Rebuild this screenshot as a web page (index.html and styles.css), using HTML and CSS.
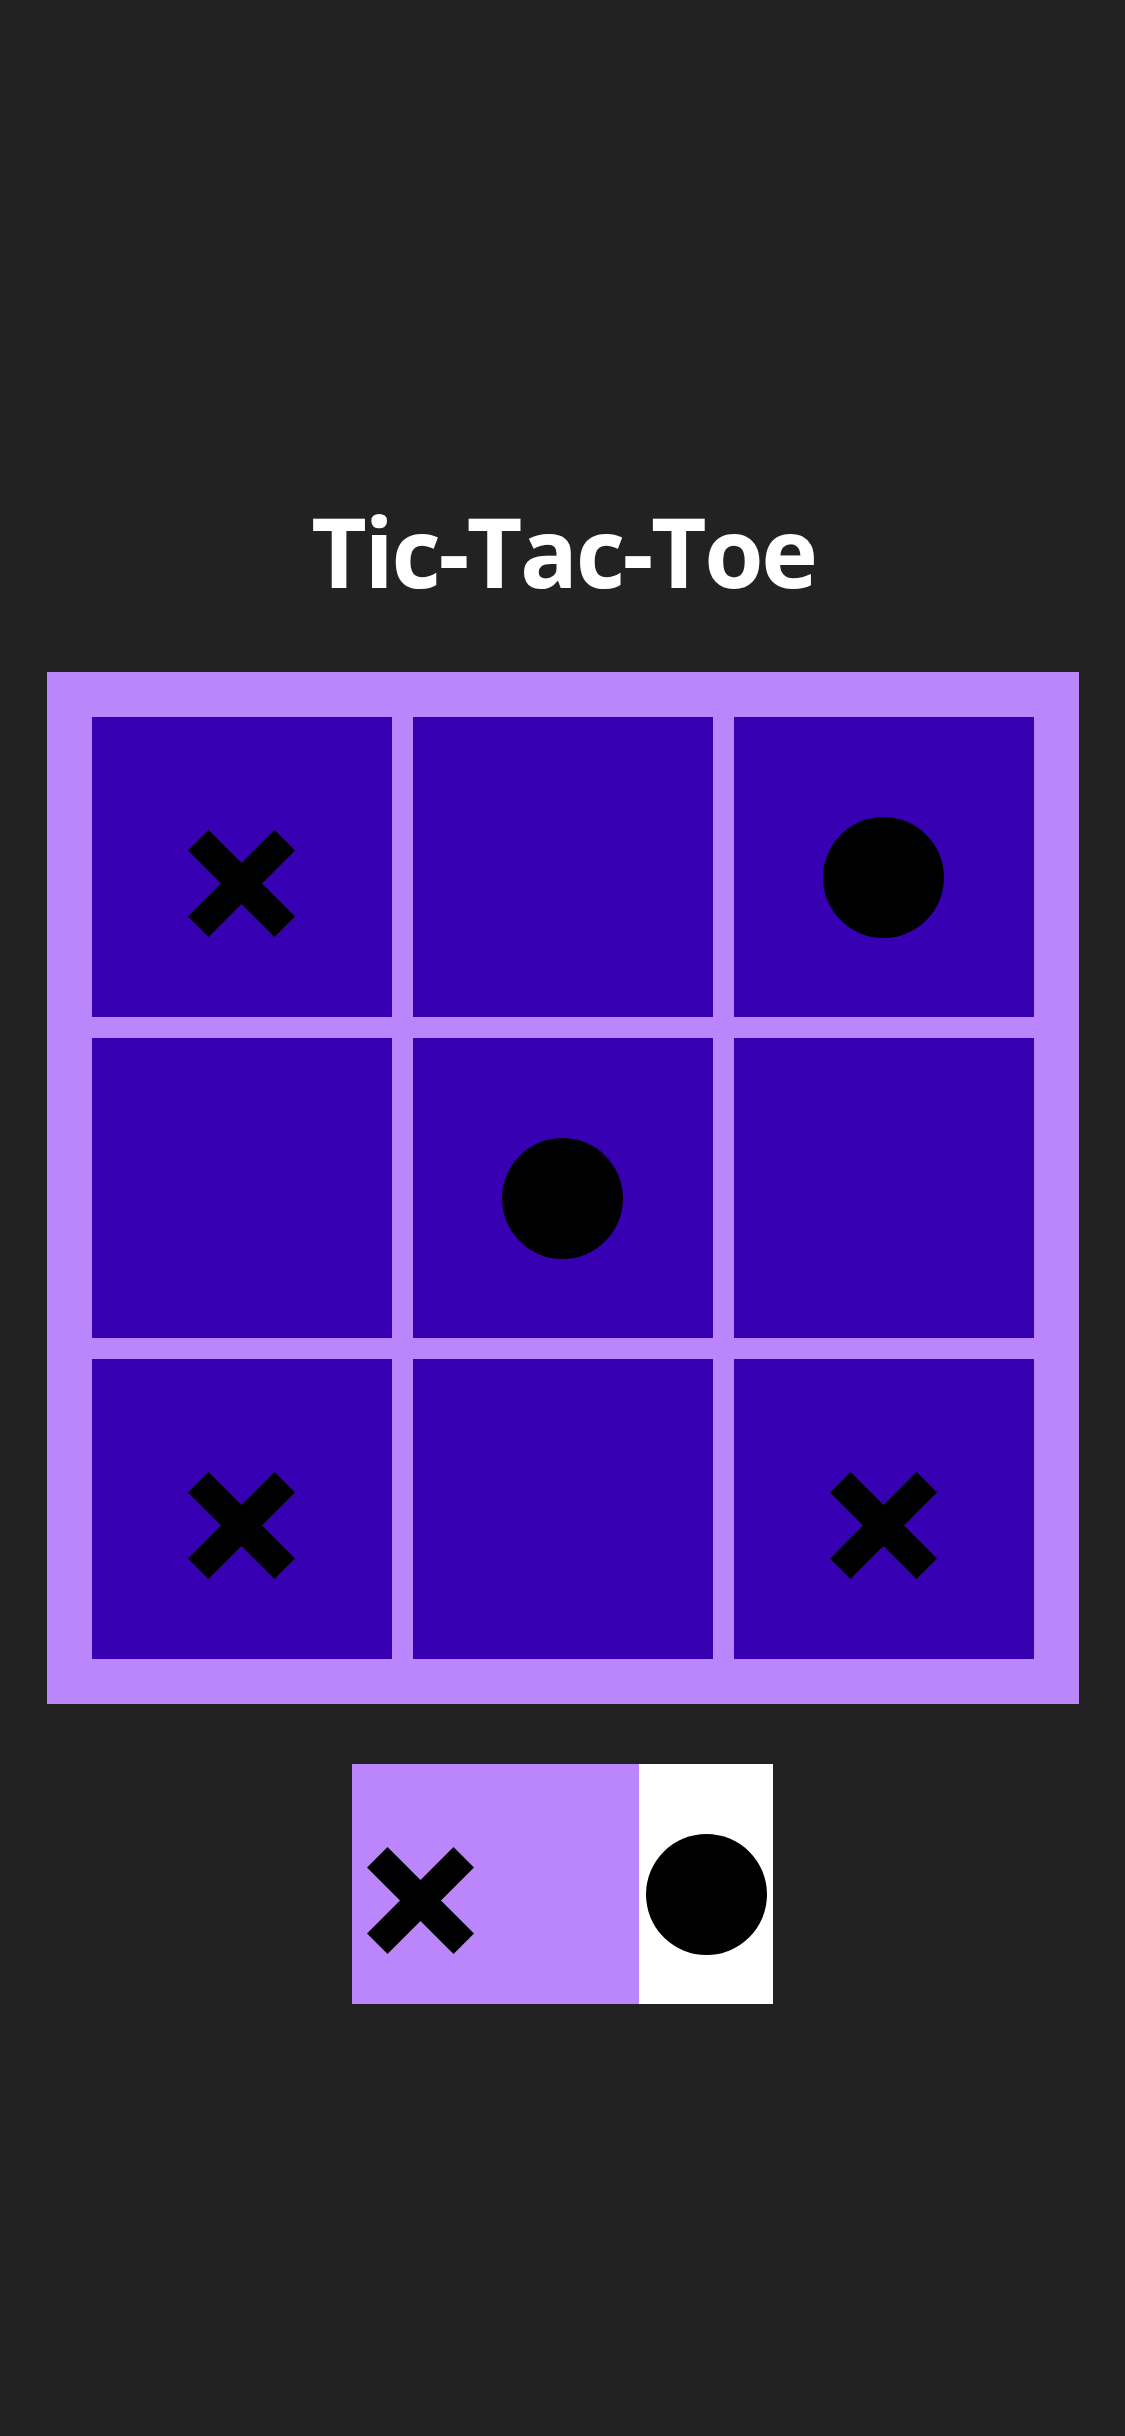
FILE: index.html
```html
<!DOCTYPE html>
<html lang="en">
<head>
<meta charset="utf-8">
<title>Tic-Tac-Toe</title>
<link rel="stylesheet" href="styles.css">
</head>
<body>
<main class="app">
  <h1 class="title">Tic-Tac-Toe</h1>
  <div class="board">
    <div class="cell"><svg class="mark mark-x" viewBox="0 0 107 107"><path d="M10.25 10.25L96.75 96.75M96.75 10.25L10.25 96.75"/></svg></div>
    <div class="cell"></div>
    <div class="cell"><svg class="mark mark-o" viewBox="0 0 121 121"><circle cx="60.5" cy="60.5" r="60.5"/></svg></div>
    <div class="cell"></div>
    <div class="cell"><svg class="mark mark-o" viewBox="0 0 121 121"><circle cx="60.5" cy="60.5" r="60.5"/></svg></div>
    <div class="cell"></div>
    <div class="cell"><svg class="mark mark-x" viewBox="0 0 107 107"><path d="M10.25 10.25L96.75 96.75M96.75 10.25L10.25 96.75"/></svg></div>
    <div class="cell"></div>
    <div class="cell"><svg class="mark mark-x" viewBox="0 0 107 107"><path d="M10.25 10.25L96.75 96.75M96.75 10.25L10.25 96.75"/></svg></div>
  </div>
  <div class="status">
    <div class="player player-x"><svg class="mark mark-x" viewBox="0 0 107 107"><path d="M10.25 10.25L96.75 96.75M96.75 10.25L10.25 96.75"/></svg></div>
    <div class="player player-o"><svg class="mark mark-o" viewBox="0 0 121 121"><circle cx="60.5" cy="60.5" r="60.5"/></svg></div>
  </div>
</main>
</body>
</html>
```
FILE: styles.css
```css
* { box-sizing: border-box; }
html, body {
  margin: 0;
  padding: 0;
  background: #222222;
}
body {
  min-height: 2436px;
  font-family: "Open Sans", "Noto Sans", "DejaVu Sans", sans-serif;
}
.app {
  display: flex;
  flex-direction: column;
  align-items: center;
  padding-top: 503px;
}
.title {
  margin: 0 0 73px;
  padding-left: 2px;
  font-size: 96px;
  line-height: 96px;
  font-weight: 700;
  letter-spacing: -2.4px;
  color: #ffffff;
  text-align: center;
}
.board {
  display: grid;
  grid-template-columns: repeat(3, 300px);
  grid-template-rows: repeat(3, 300px);
  gap: 21px;
  padding: 45px;
  background: #bb86fc;
}
.cell {
  background: #3700b3;
  display: flex;
  align-items: center;
  justify-content: center;
}
.mark { display: block; flex: none; }
.mark-x {
  width: 107px;
  height: 107px;
  margin-top: 32px;
  stroke: #000;
  stroke-width: 29;
  fill: none;
}
.mark-o {
  width: 121px;
  height: 121px;
  margin-top: 21px;
  fill: #000;
}
.status {
  display: flex;
  margin-top: 60px;
  height: 240px;
}
.player {
  display: flex;
  align-items: center;
}
.player-x {
  width: 287px;
  background: #bb86fc;
  padding-left: 15px;
}
.player-o {
  width: 134px;
  background: #ffffff;
  justify-content: center;
}
```
